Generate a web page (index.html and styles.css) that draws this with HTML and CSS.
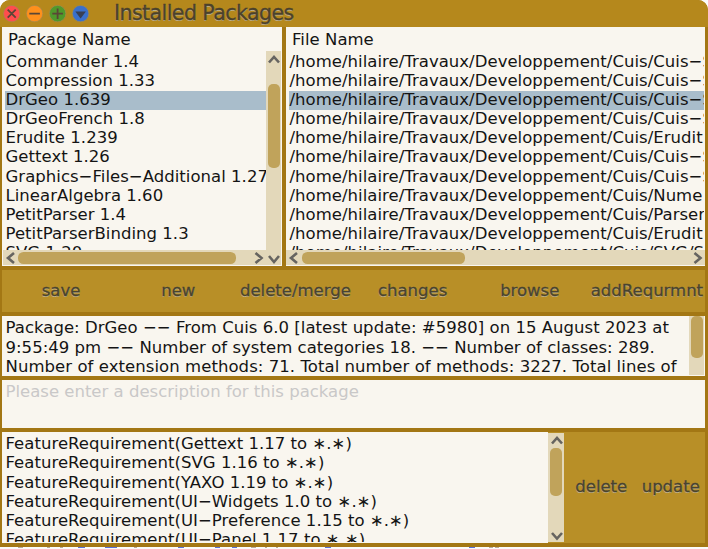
FILE: index.html
```html
<!DOCTYPE html>
<html lang="en">
<head>
<meta charset="utf-8">
<title>Installed Packages</title>
<link rel="stylesheet" href="styles.css">
</head>
<body>
<main class="window">
  <header class="titlebar">
    <svg class="controls" width="90" height="27" viewBox="0 0 90 27">
      <g stroke="#a08a50" stroke-width=".7">
        <circle cx="11.7" cy="13.6" r="8.2" fill="#ff4d4d"/>
        <circle cx="34.6" cy="13.6" r="8.2" fill="#ff901c"/>
        <circle cx="57.6" cy="13.6" r="8.2" fill="#4f992b"/>
        <circle cx="80.6" cy="13.6" r="8.2" fill="#3a70cb"/>
      </g>
      <g stroke="#5a4636" stroke-width="1.8" fill="none">
        <path d="M7.7 9.7l8 8M15.7 9.7l-8 8M29.3 13.7h10.6M52.3 13.7h10.6M57.6 8.5v10.4"/>
      </g>
      <path d="M75.3 11.5h10.6l-5.3 7z" fill="#383f54"/>
    </svg>
    <h1 class="title">Installed Packages</h1>
  </header>
  <section class="lists">
    <div class="pane">
      <div class="head">Package Name</div>
      <div class="mid">
        <div class="rows">
          <div class="row">Commander 1.4</div>
          <div class="row">Compression 1.33</div>
          <div class="row selected">DrGeo 1.639</div>
          <div class="row">DrGeoFrench 1.8</div>
          <div class="row">Erudite 1.239</div>
          <div class="row">Gettext 1.26</div>
          <div class="row">Graphics−Files−Additional 1.27</div>
          <div class="row">LinearAlgebra 1.60</div>
          <div class="row">PetitParser 1.4</div>
          <div class="row">PetitParserBinding 1.3</div>
          <div class="row">SVG 1.20</div>
        </div>
        <svg class="vbar" width="15" height="199"><rect x="2" y="33" width="12" height="84" rx="5"/><path d="M3 11.5L8 6l5 5.5"/></svg>
      </div>
      <svg class="hbar" width="278" height="15"><rect x="15" y="2" width="218" height="12" rx="5.5"/><path d="M11 3L5 8l6 5M252.500 3l6 5-6 5M266 6l5 6 5-6"/></svg>
    </div>
    <div class="pane files">
      <div class="head">File Name</div>
      <div class="mid">
        <div class="rows">
          <div class="row">/home/hilaire/Travaux/Developpement/Cuis/Cuis−S</div>
          <div class="row">/home/hilaire/Travaux/Developpement/Cuis/Cuis−S</div>
          <div class="row selected">/home/hilaire/Travaux/Developpement/Cuis/Cuis−S</div>
          <div class="row">/home/hilaire/Travaux/Developpement/Cuis/Cuis−S</div>
          <div class="row">/home/hilaire/Travaux/Developpement/Cuis/Erudit</div>
          <div class="row">/home/hilaire/Travaux/Developpement/Cuis/Cuis−S</div>
          <div class="row">/home/hilaire/Travaux/Developpement/Cuis/Cuis−S</div>
          <div class="row">/home/hilaire/Travaux/Developpement/Cuis/Nume</div>
          <div class="row">/home/hilaire/Travaux/Developpement/Cuis/Parser</div>
          <div class="row">/home/hilaire/Travaux/Developpement/Cuis/Erudit</div>
          <div class="row">/home/hilaire/Travaux/Developpement/Cuis/SVG/S</div>
        </div>
      </div>
      <svg class="hbar" width="419" height="15"><rect x="16" y="2" width="163" height="12" rx="5.5"/><path d="M11 3L5 8l6 5M408.500 3l6 5-6 5"/></svg>
    </div>
  </section>
  <nav class="actions">
    <button>save</button><button>new</button><button>delete/merge</button><button>changes</button><button>browse</button><button>addRequrmnt</button>
  </nav>
  <section class="info">
    <p class="text">Package: DrGeo −− From Cuis 6.0 [latest update: #5980] on 15 August 2023 at<br>9:55:49 pm −− Number of system categories 18. −− Number of classes: 289.<br><span class="wide">Number of extension methods: 71. Total number of methods: 3227. Total lines of</span></p>
    <svg class="vbar" width="15" height="59"><rect x="2" y="0" width="12" height="42" rx="5"/></svg>
  </section>
  <section class="description">Please enter a description for this package</section>
  <section class="requirements">
    <div class="features">
      <div>FeatureRequirement(Gettext 1.17 to ∗.∗)</div>
      <div>FeatureRequirement(SVG 1.16 to ∗.∗)</div>
      <div>FeatureRequirement(YAXO 1.19 to ∗.∗)</div>
      <div>FeatureRequirement(UI−Widgets 1.0 to ∗.∗)</div>
      <div>FeatureRequirement(UI−Preference 1.15 to ∗.∗)</div>
      <div>FeatureRequirement(UI−Panel 1.17 to ∗.∗)</div>
    </div>
    <svg class="vbar feature-bar" width="16" height="109"><rect x="2" y="15" width="12" height="48" rx="5"/><path d="M4 10.500L9 5l5 5.500M4 100l5 5.500 5-5.500"/></svg>
    <div class="side"><button>delete</button><button>update</button></div>
  </section>
</main>
<svg class="backdrop" width="708" height="2"><path d="M18 .5h5M47 .5h3M60 .5h3M134 .5h3M251 .5h5M265 .5h2M276 .5h2M489 .5h4M495 .5h4" stroke="#b8a89c"/><path d="M78 .5h7M105 .5h12M178 .5h6M215 .5h5M232 .5h5M325 .5h6M469 .5h6" stroke="#5a70d8"/></svg>
</body>
</html>
```
FILE: styles.css
```css
* { box-sizing: border-box; }
body {
  margin: 0;
  height: 549px;
  overflow: hidden;
  background: #fbfbfb;
  font: 16.5px/19px "DejaVu Sans", sans-serif;
  letter-spacing: 0.03px;
  color: #141414;
}
.window {
  width: 708px;
  height: 547px;
  display: grid;
  grid-template-rows: 27px 243px 46px 64px 52px 111px;
  padding: 0 3px 4px 2px;
  background: #a37714;
  border-radius: 10px 10px 0 0;
  overflow: hidden;
}
.backdrop { display: block; }
.titlebar {
  display: flex;
  margin: 0 -3px 0 -2px;
  height: 27px;
  background: #b5881c;
}
.controls { display: block; flex: none; }
.title {
  margin: 0 0 0 24px;
  font-size: 20.5px;
  font-weight: 400;
  letter-spacing: -0.55px;
  line-height: 26px;
  white-space: nowrap;
  color: #4b412b;
  -webkit-text-stroke: 0.3px #4b412b;
  text-shadow: 0 1px 0 #bdb08c;
}
.lists {
  display: grid;
  grid-template-columns: 280px 419px;
  gap: 4px;
  height: 239px;
}
.pane {
  display: grid;
  grid-template-rows: 24px 199px 15px;
  min-width: 0;
  background: #f9f6ef;
  overflow: hidden;
}
.head { padding: 3px 6px; white-space: nowrap; }
.mid { display: flex; min-width: 0; overflow: hidden; }
.rows {
  width: 261px;
  margin-left: 3px;
  padding-top: 2px;
  overflow: hidden;
  white-space: nowrap;
}
.files .rows { width: 415px; }
.row { height: 19.1px; padding-left: 0.5px; line-height: 17px; }
.selected { background: #a9bdcb; }
.vbar, .hbar { display: block; flex: none; background: #e3d8ba; }
.hbar { margin-left: 1px; }
.files .hbar { margin-left: 0; }
.vbar rect, .hbar rect { fill: #c0a35b; }
.vbar path, .hbar path { fill: none; stroke: #666460; stroke-width: 2.6; }
.actions {
  display: grid;
  grid-template-columns: repeat(6, 1fr);
  height: 42px;
  background: #b88f27;
}
button {
  min-width: 0;
  padding: 0 0 2px 1px;
  border: 0;
  background: none;
  font: 16.5px/19px "DejaVu Sans", sans-serif;
  color: #49432f;
  white-space: nowrap;
  -webkit-text-stroke: 0.3px #49432f;
  text-shadow: 0 1px 0 #c4b58c;
}
.info {
  display: flex;
  height: 60px;
  background: #f9f6ef;
  overflow: hidden;
}
.text { flex: none; width: 687px; margin: 0; padding: 2px 0 0 3.500px; line-height: 19.5px; white-space: nowrap; }
.wide { letter-spacing: 0.06px; }
.description { height: 48px; padding: 2px 3.500px; background: #f9f6ef; color: #c9c8c8; letter-spacing: 0; }
.requirements { display: flex; height: 111px; background: #b88f27; }
.features {
  width: 546px;
  height: 111px;
  padding: 2px 0 0 3.500px;
  background: #f9f6ef;
  border-bottom: 1px solid #f9f6ef;
  line-height: 19.3px;
  overflow: hidden;
  white-space: nowrap;
}
.feature-bar { margin-top: 1px; }
.side { flex: 1; display: grid; grid-template-columns: 1fr 1fr; padding-left: 2px; }
```
